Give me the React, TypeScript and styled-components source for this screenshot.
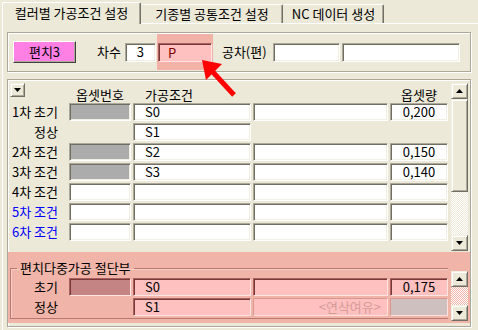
import React from "react";
import styled, { createGlobalStyle, css } from "styled-components";

const Global = createGlobalStyle`
  html, body { margin: 0; padding: 0; background: #ECE9D8; }
  body { font-family: "Noto Sans CJK KR", "Noto Sans", sans-serif; font-size: 13px; }
  *, *::before, *::after { box-sizing: border-box; }
`;

const Window = styled.div`
  position: relative;
  width: 478px;
  height: 330px;
  overflow: hidden;
  background: #ece9d8;
  color: #000;
  font-family: "Noto Sans CJK KR", "Noto Sans", sans-serif;
  font-size: 13px;
  line-height: 14px;
  display: flex;
  flex-direction: column;
`;

const TabStrip = styled.div`
  display: flex;
  align-items: flex-end;
  height: 23px;
  padding-left: 2px;
`;

const Tab = styled.div<{ $w: number; $active?: boolean }>`
  position: relative;
  width: ${(p) => p.$w}px;
  height: ${(p) => (p.$active ? 22 : 19)}px;
  margin-bottom: ${(p) => (p.$active ? -1 : 0)}px;
  z-index: ${(p) => (p.$active ? 2 : 1)};
  background: #ece9d8;
  border-top: 1px solid #fff;
  border-left: 1px solid ${(p) => (p.$active ? "#fff" : "#ece9d8")};
  border-right: 1px solid #716f64;
  box-shadow: inset -1px 0 #aca899;
  border-radius: 2px 2px 0 0;
  display: flex;
  align-items: center;
  justify-content: center;
  padding-bottom: ${(p) => (p.$active ? 2 : 0)}px;
  white-space: nowrap;
`;

const Panel = styled.div`
  flex: 1;
  margin-left: 2px;
  border-top: 1px solid #fff;
  border-left: 1px solid #fff;
  padding: 8px 0 0 4px;
  display: flex;
  flex-direction: column;
`;

const etched = css`
  border: 1px solid #aca899;
  box-shadow: inset 1px 1px #fff, 1px 1px #fff;
`;

const HeaderGroup = styled.div`
  ${etched};
  width: 464px;
  height: 40px;
  display: flex;
  align-items: center;
  padding-left: 5px;
`;

const PunchButton = styled.div`
  width: 63px;
  height: 22px;
  background: #ff80e4;
  border: 1px solid;
  border-color: #fff #404040 #404040 #fff;
  box-shadow: inset -1px -1px #aca899;
  display: flex;
  align-items: center;
  justify-content: center;
`;

const Label = styled.span<{ $ml: number; $w?: number }>`
  margin-left: ${(p) => p.$ml}px;
  ${(p) => (p.$w ? `width:${p.$w}px;` : "")}
  white-space: nowrap;
`;

const sunken = css`
  border: 1px solid;
  border-color: #aca899 #fff #fff #aca899;
  box-shadow: inset 1px 1px #716f64, inset -1px -1px #f1efe2;
`;

const Field = styled.div<{ $w: number; $ml: number; $center?: boolean }>`
  ${sunken};
  width: ${(p) => p.$w}px;
  height: 19px;
  margin-left: ${(p) => p.$ml}px;
  background: #fff;
  display: flex;
  align-items: center;
  justify-content: ${(p) => (p.$center ? "center" : "flex-start")};
  padding-left: ${(p) => (p.$center ? 0 : 9)}px;
`;

const Highlight = styled.div`
  margin-left: 1px;
  width: 56px;
  height: 36px;
  background: #f2b2a8;
  display: flex;
  align-items: center;
  justify-content: center;
  padding-top: 1px;
`;

const PinkField = styled.div`
  width: 54px;
  height: 19px;
  background: #ffc0c0;
  color: #800000;
  border: 1px solid;
  border-color: #a86060 #ffe4e4 #ffe4e4 #a86060;
  box-shadow: inset 1px 1px #783838;
  display: flex;
  align-items: center;
  padding-left: 9px;
`;

const GridGroup = styled.div`
  ${etched};
  margin-top: 7px;
  width: 464px;
  height: 248px;
  display: flex;
  flex-direction: column;
`;

const GridArea = styled.div`
  display: flex;
  padding: 3px 2px 1px 2px;
  height: 172px;
`;

const Grid = styled.div<{ $labelW: number }>`
  display: grid;
  grid-template-columns: ${(p) => p.$labelW}px 62px 118px 135px 58px;
  grid-auto-rows: 18px;
  column-gap: 2px;
  row-gap: 2px;
  align-content: start;
`;

const HeaderRow = styled.div`
  display: contents;
`;

const HeadCell = styled.div<{ $align: "left" | "center" }>`
  height: 22px;
  display: flex;
  align-items: flex-end;
  justify-content: ${(p) => (p.$align === "center" ? "center" : "flex-start")};
  padding-left: ${(p) => (p.$align === "center" ? 0 : 12)}px;
  padding-bottom: 4px;
  line-height: 13px;
  white-space: nowrap;
`;

const HeadCorner = styled.div`
  height: 22px;
`;

const raised = css`
  background: #ece9d8;
  border: 1px solid;
  border-color: #f1efe2 #716f64 #716f64 #f1efe2;
  box-shadow: inset 1px 1px #fff, inset -1px -1px #aca899;
`;

const DropButton = styled.div`
  ${raised};
  width: 15px;
  height: 14px;
  display: flex;
  align-items: center;
  justify-content: center;
`;

const RowLabel = styled.div<{ $blue?: boolean }>`
  display: flex;
  align-items: center;
  justify-content: flex-end;
  padding-right: 9px;
  white-space: nowrap;
  color: ${(p) => (p.$blue ? "#0000ff" : "#000")};
`;

type Variant = "white" | "gray" | "none" | "pink" | "rose" | "pinkDim" | "pinkOff";

const pinkEdge = css`
  border: 1px solid;
  border-color: #a86060 #ffe4e4 #ffe4e4 #a86060;
  box-shadow: inset 1px 1px #783838;
`;

const variantStyle: Record<Variant, ReturnType<typeof css>> = {
  white: css`
    ${sunken};
    background: #fff;
  `,
  gray: css`
    ${sunken};
    background: #acacac;
  `,
  none: css`
    background: transparent;
  `,
  pink: css`
    ${pinkEdge};
    background: #ffc0c0;
  `,
  rose: css`
    ${pinkEdge};
    background: #c48484;
  `,
  pinkDim: css`
    background: #ffc0c0;
    border: 1px solid;
    border-color: #d89890 #ffe0dc #ffe0dc #d89890;
    color: #d59c98;
  `,
  pinkOff: css`
    background: #cfc0c0;
    border: 1px solid;
    border-color: #d89890 #ffe0dc #ffe0dc #d89890;
  `,
};

const Cell = styled.div<{ $v: Variant; $align: "left" | "center" | "right" }>`
  ${(p) => variantStyle[p.$v]};
  display: flex;
  align-items: center;
  justify-content: ${(p) =>
    p.$align === "center" ? "center" : p.$align === "right" ? "flex-end" : "flex-start"};
  padding-left: ${(p) => (p.$align === "left" ? 11 : 0)}px;
  padding-right: ${(p) => (p.$align === "right" ? 6 : 0)}px;
  white-space: nowrap;
`;

const ScrollBar = styled.div<{ $h: number; $mt?: number }>`
  width: 17px;
  height: ${(p) => p.$h}px;
  margin-left: 3px;
  margin-top: ${(p) => p.$mt ?? 0}px;
  display: flex;
  flex-direction: column;
  flex-shrink: 0;
`;

const SBButton = styled.div`
  ${raised};
  height: 16px;
  flex-shrink: 0;
  display: flex;
  align-items: center;
  justify-content: center;
`;

const Thumb = styled.div<{ $h: number }>`
  ${raised};
  height: ${(p) => p.$h}px;
  flex-shrink: 0;
`;

const Track = styled.div<{ $tone: string }>`
  flex: 1;
  background: repeating-conic-gradient(#fff 0 25%, ${(p) => p.$tone} 0 50%) 0 0 / 2px 2px;
`;

const PinkSection = styled.div`
  height: 71px;
  background: #f0b4a8;
  display: flex;
  align-items: flex-start;
  padding: 9px 2px 0 2px;
`;

const PinkFrame = styled.fieldset`
  flex: 1;
  margin: 0;
  min-width: 0;
  padding: 3px 0 2px 0;
  border: 1px solid #b87870;
  border-right: none;
  box-shadow: inset 1px 1px #f8cfc6;
`;

const PinkLegend = styled.legend`
  padding: 0 3px;
  margin-left: 6px;
  line-height: 14px;
  font-size: 13px;
`;

const ArrowLayer = styled.svg`
  position: absolute;
  left: 0;
  top: 0;
  pointer-events: none;
`;

const Tri = ({ dir }: { dir: "up" | "down" }) => (
  <svg width="7" height="4" viewBox="0 0 7 4">
    {dir === "up" ? <polygon points="3.5,0 7,4 0,4" fill="#000" /> : <polygon points="0,0 7,0 3.5,4" fill="#000" />}
  </svg>
);

type CellDef = { v: Variant; t?: string; a?: "left" | "center" | "right" };
type RowDef = { label: string; blue?: boolean; cells: CellDef[] };

const W: CellDef = { v: "white" };
const N: CellDef = { v: "none" };
const G: CellDef = { v: "gray" };

const mainRows: RowDef[] = [
  { label: "1차 초기", cells: [G, { v: "white", t: "S0" }, W, { v: "white", t: "0,200", a: "center" }] },
  { label: "정상", cells: [N, { v: "white", t: "S1" }, N, N] },
  { label: "2차 조건", cells: [G, { v: "white", t: "S2" }, W, { v: "white", t: "0,150", a: "center" }] },
  { label: "3차 조건", cells: [G, { v: "white", t: "S3" }, W, { v: "white", t: "0,140", a: "center" }] },
  { label: "4차 조건", cells: [W, W, W, W] },
  { label: "5차 조건", blue: true, cells: [W, W, W, W] },
  { label: "6차 조건", blue: true, cells: [W, W, W, W] },
];

const pinkRows: RowDef[] = [
  {
    label: "초기",
    cells: [{ v: "rose" }, { v: "pink", t: "S0" }, { v: "pink" }, { v: "pink", t: "0,175", a: "center" }],
  },
  {
    label: "정상",
    cells: [N, { v: "pink", t: "S1" }, { v: "pinkDim", t: "<연삭여유>", a: "right" }, { v: "pinkOff" }],
  },
];

const renderRows = (rows: RowDef[]) =>
  rows.map((r, ri) => (
    <React.Fragment key={ri}>
      <RowLabel $blue={r.blue}>{r.label}</RowLabel>
      {r.cells.map((c, i) => (
        <Cell key={i} $v={c.v} $align={c.a ?? "left"}>
          {c.t}
        </Cell>
      ))}
    </React.Fragment>
  ));

export default function App() {
  return (
    <>
      <Global />
      <Window>
        <TabStrip>
          <Tab $w={139} $active>
            컬러별 가공조건 설정
          </Tab>
          <Tab $w={142}>기종별 공통조건 설정</Tab>
          <Tab $w={101}>NC 데이터 생성</Tab>
        </TabStrip>
        <Panel>
          <HeaderGroup>
            <PunchButton>편치3</PunchButton>
            <Label $ml={21}>차수</Label>
            <Field $w={31} $ml={4} $center>
              3
            </Field>
            <Highlight>
              <PinkField>P</PinkField>
            </Highlight>
            <Label $ml={9} $w={48}>
              공차(편)
            </Label>
            <Field $w={67} $ml={3} />
            <Field $w={118} $ml={2} />
          </HeaderGroup>

          <GridGroup>
            <GridArea>
              <Grid $labelW={57}>
                <HeaderRow>
                  <HeadCorner>
                    <DropButton>
                      <Tri dir="down" />
                    </DropButton>
                  </HeadCorner>
                  <HeadCell $align="center">옵셋번호</HeadCell>
                  <HeadCell $align="left">가공조건</HeadCell>
                  <HeadCorner />
                  <HeadCell $align="center">옵셋량</HeadCell>
                </HeaderRow>
                {renderRows(mainRows)}
              </Grid>
              <ScrollBar $h={168}>
                <SBButton>
                  <Tri dir="up" />
                </SBButton>
                <Thumb $h={93} />
                <Track $tone="#ece9d8" />
                <SBButton>
                  <Tri dir="down" />
                </SBButton>
              </ScrollBar>
            </GridArea>

            <PinkSection>
              <PinkFrame>
                <PinkLegend>편치다중가공 절단부</PinkLegend>
                <Grid $labelW={56}>{renderRows(pinkRows)}</Grid>
              </PinkFrame>
              <ScrollBar $h={50} $mt={10}>
                <SBButton>
                  <Tri dir="up" />
                </SBButton>
                <Track $tone="#f0b4a8" />
                <SBButton>
                  <Tri dir="down" />
                </SBButton>
              </ScrollBar>
            </PinkSection>
          </GridGroup>
        </Panel>

        <ArrowLayer width="478" height="330" viewBox="0 0 478 330">
          <line x1="234" y1="95" x2="211" y2="70" stroke="#ff0000" strokeWidth="5" />
          <polygon points="202,60 222,64 206,80" fill="#ff0000" />
        </ArrowLayer>
      </Window>
    </>
  );
}
